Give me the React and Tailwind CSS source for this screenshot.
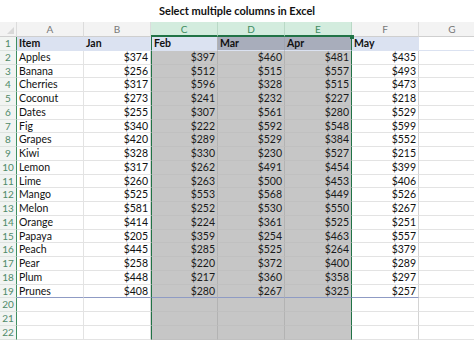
const rows = [
  ["Apples", 374, 397, 460, 481, 435],
  ["Banana", 256, 512, 515, 557, 493],
  ["Cherries", 317, 596, 328, 515, 473],
  ["Coconut", 273, 241, 232, 227, 218],
  ["Dates", 255, 307, 561, 280, 529],
  ["Fig", 340, 222, 592, 548, 599],
  ["Grapes", 420, 289, 529, 384, 552],
  ["Kiwi", 328, 330, 230, 527, 215],
  ["Lemon", 317, 262, 491, 454, 399],
  ["Lime", 260, 263, 500, 453, 406],
  ["Mango", 525, 553, 568, 449, 526],
  ["Melon", 581, 252, 530, 550, 267],
  ["Orange", 414, 224, 361, 525, 251],
  ["Papaya", 205, 359, 254, 463, 557],
  ["Peach", 445, 285, 525, 264, 379],
  ["Pear", 258, 220, 372, 400, 289],
  ["Plum", 448, 217, 360, 358, 297],
  ["Prunes", 408, 280, 267, 325, 257],
];

const letters = ["A", "B", "C", "D", "E", "F", "G"];

function RowHead({ n }) {
  return (
    <div className="h-[13.75px] bg-[#f1f4f2] border-r-[1.5px] border-r-[#3f8f62] border-b border-b-[#dde3df] text-[10px] leading-[13px] text-[#4f8a69] text-center">
      {n}
    </div>
  );
}

// col index 0..6 ; returns classes for a body cell
function cellCls(c, r, last) {
  const sel = c >= 2 && c <= 4;
  let cls = "h-[13.75px] text-[10.5px] leading-[13px] px-[2px] whitespace-nowrap overflow-hidden ";
  if (sel) {
    cls += "bg-[#c6c6c6] text-[#1a1a1a] border-b border-b-[#c0c0c0] ";
    if (c === 2) cls += "border-l-[1.5px] border-l-[#217346] ";
    if (c === 4) cls += "border-r-[1.5px] border-r-[#217346] ";
    else cls += "border-r border-r-[#b3b3b3] ";
  } else {
    cls += "bg-white text-[#111] border-b border-b-[#e3e3e3] ";
    if (c === 1 || c === 5) cls += "border-r border-r-[#d4d4d4] ";
    else if (c !== 4) cls += "border-r border-r-[#e3e3e3] ";
  }
  if (last) cls += "!border-b-[#8f9bc4] ";
  return cls;
}

export default function App() {
  return (
    <div
      className="w-[474px] h-[342px] bg-white overflow-hidden flex flex-col"
      style={{ fontFamily: "Lato, 'Open Sans', sans-serif" }}
    >
      {/* title */}
      <div className="h-[22px] flex items-center justify-center text-[11px] font-bold text-[#111]">
        Select multiple columns in Excel
      </div>

      <div className="grid grid-cols-[17px_repeat(7,67px)]">
        {/* column headers */}
        <div className="h-[15px] bg-[#f3f3f3] border-r border-r-[#dcdcdc] border-b border-b-[#cfcfcf] relative">
          <div className="absolute right-[2px] bottom-[2px] w-0 h-0 border-l-[7px] border-l-transparent border-b-[7px] border-b-[#d8d8d8]" />
        </div>
        {letters.map((l, i) => {
          const sel = i >= 2 && i <= 4;
          return (
            <div
              key={l}
              className={
                "h-[15px] text-[10px] leading-[14px] text-center border-r " +
                (sel
                  ? "bg-[#d3ecde] text-[#3d8b5f] border-r-[#b9d9c6] border-b-2 border-b-[#217346]"
                  : "bg-[#f3f3f3] text-[#777] border-r-[#dcdcdc] border-b border-b-[#cfcfcf]")
              }
            >
              {l}
            </div>
          );
        })}

        {/* row 1 headers */}
        <RowHead n={1} />
        {["Item", "Jan", "Feb", "Mar", "Apr", "May", ""].map((h, c) => {
          let extra = "";
          if (c === 2) extra = "bg-[#dbe2f1] border-l-[1.5px] border-l-[#217346] border-r border-r-[#b3b3b3]";
          else if (c === 3) extra = "bg-[#a8adbb] border-r border-r-[#a0a4b0]";
          else if (c === 4) extra = "bg-[#a8adbb] border-r-[1.5px] border-r-[#217346] relative";
          else if (c === 6) extra = "bg-white border-r border-r-[#e3e3e3]";
          else extra = "bg-[#dbe2f1] border-r border-r-[#dbe2f1]";
          return (
            <div
              key={c}
              className={
                "h-[13.75px] text-[10.5px] leading-[13px] px-[2px] font-bold text-[#111] border-b border-b-[#dbe2f1] " +
                extra
              }
            >
              {h}
              {c === 4 && (
                <div className="absolute -right-[3px] -top-[2px] w-[4px] h-[4px] bg-[#217346]" />
              )}
            </div>
          );
        })}

        {/* data rows */}
        {rows.map((row, r) => (
          <Row key={r} n={r + 2} row={row} last={r === rows.length - 1} />
        ))}

        {/* empty rows */}
        {[20, 21, 22].map((n) => (
          <Row key={n} n={n} row={["", "", "", "", "", ""]} last={false} />
        ))}
      </div>
    </div>
  );
}

function Row({ n, row, last }) {
  const cells = [...row, ""];
  return (
    <>
      <RowHead n={n} />
      {cells.map((v, c) => (
        <div
          key={c}
          className={cellCls(c, n, last && c <= 5) + (c === 0 ? "text-left" : "text-right")}
        >
          {v === "" ? "" : c === 0 ? v : "$" + v}
        </div>
      ))}
    </>
  );
}
